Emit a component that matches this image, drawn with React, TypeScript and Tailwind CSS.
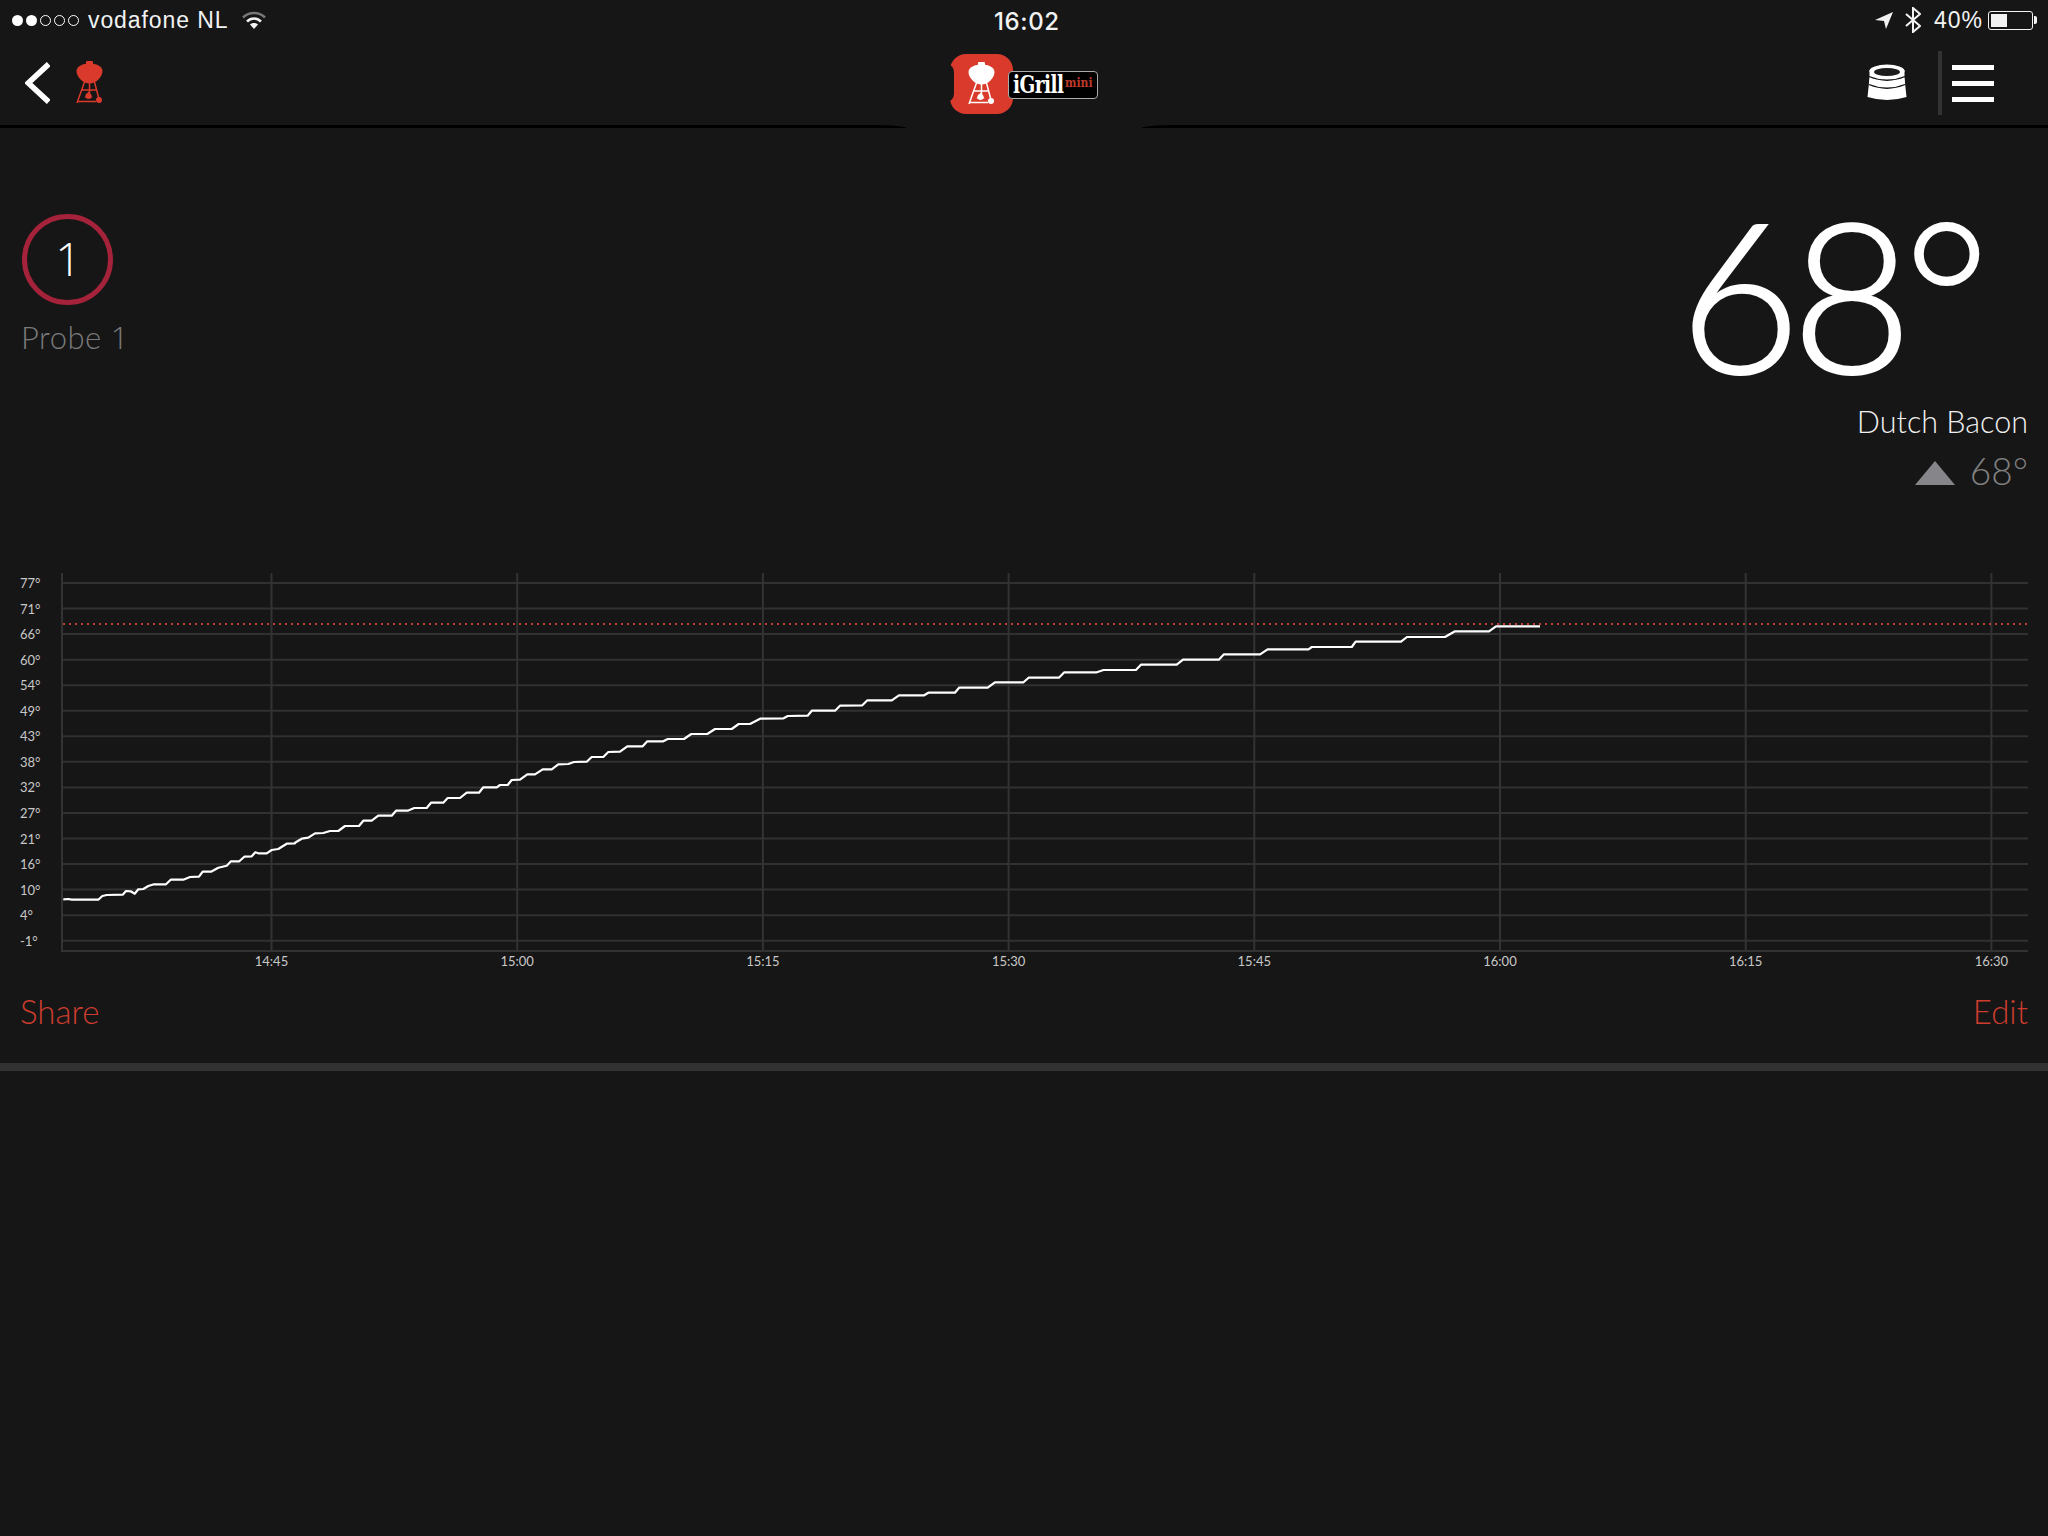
const z7: number[][] = [[190,298],[205,297],[215,299],[295,299],[307,288],[320,285],[368,284],[378,273],[392,274],[404,281],[415,268],[430,267],[445,258],[462,253],[498,253],[512,239],[550,239],[570,231],[597,230],[608,215],[633,215],[655,203],[680,197],[693,184],[718,184],[733,170],[755,169],[766,157],[775,160],[800,160],[815,150],[835,147],[860,131],[885,130]];
const z11: number[][] = [[0,218],[20,206],[40,203],[60,190],[85,189],[105,183],[130,183],[150,168],[192,168],[205,152],[230,152],[250,137],[290,137],[303,122],[338,122],[358,114],[395,114],[408,98],[445,98],[458,84],[495,84],[515,68],[552,68],[565,52],[605,52],[615,45],[638,45]];
const z10: number[][] = [[35,180],[60,179],[82,163],[105,163],[128,148],[155,148],[175,133],[205,132],[222,126],[260,125],[275,111],[310,111],[325,96],[360,95],[382,79],[428,79],[442,64],[490,64],[503,57],[552,57],[574,42],[622,42],[645,27],[695,27],[716,12],[750,12]];
const z12: number[][] = [[12,296],[68,295],[78,288],[125,287],[135,272],[190,272],[202,257],[255,256],[267,241],[325,241],[342,226],[402,226],[412,218],[475,218],[485,203],[553,203],[570,187],[638,187],[650,173],[722,173],[735,157],[812,157],[828,150],[905,150],[917,134],[1002,134],[1017,119],[1102,119],[1114,103],[1200,103],[1218,88],[1315,88],[1323,81],[1418,81],[1427,65],[1535,65]];
const linePoints = [
  ...z7.map(([x, y]) => [x / 3, 800 + y / 3]),
  ...z11.map(([x, y]) => [295 + x / 3, 770 + y / 3]),
  ...z10.map(([x, y]) => [500 + x / 3, 720 + y / 3]),
  ...z12.map(([x, y]) => [755 + x / 2.376, 620 + y / 3]),
  [1407, 637], [1445, 637], [1455, 631.3], [1489, 631.3], [1496, 626.3], [1540, 626.3],
].map(([x, y]) => `${x.toFixed(1)},${y.toFixed(1)}`).join(" ");

const yLabels = ["77°", "71°", "66°", "60°", "54°", "49°", "43°", "38°", "32°", "27°", "21°", "16°", "10°", "4°", "-1°"];
const xLabels = ["14:45", "15:00", "15:15", "15:30", "15:45", "16:00", "16:15", "16:30"];

function Kettle({ color, className }: { color: string; className: string }) {
  return (
    <svg viewBox="0 0 30 43" className={className} fill={color} stroke="none">
      <path d="M10 3 V1 Q10 0 11 0 H16 Q17 0 17 1 V3 Z" />
      <path d="M0.500 10 C0.500 5 7 2.500 13.500 2.500 C20 2.500 26.500 5 26.500 10 C26.500 16 20 22.500 13.500 22.500 C7 22.500 0.500 16 0.500 10 Z" />
      <g stroke={color} strokeWidth="1.500" fill="none">
        <path d="M8.500 21 L1 42 M18.500 21 L23 38 M13.500 21 V32" />
        <path d="M5.500 29 H21 M2 40.500 H20" />
      </g>
      <path d="M12.500 30.500 L16.500 36.500 H8.500 Z" />
      <circle cx="12.500" cy="35" r="3" />
      <circle cx="23" cy="39" r="3" />
    </svg>
  );
}

function ProbeStack() {
  return (
    <svg viewBox="0 0 40 37" className="w-[40px] h-[37px] mt-[-1px]" fill="none">
      <path d="M2.500 6 V13 Q2 16 2 19 L0.500 33 Q20 39 39.500 33 L38 19 Q38 16 37.500 13 V6 Z" fill="#ffffff" />
      <ellipse cx="20" cy="7" rx="17.500" ry="6.500" fill="#ffffff" />
      <ellipse cx="20" cy="8" rx="13" ry="4" fill="#1c1c1c" />
      <path d="M2 12.500 Q20 20 38 12.500" stroke="#161616" strokeWidth="1.300" />
      <path d="M2 20.500 Q20 28 38 20.500" stroke="#161616" strokeWidth="1.300" />
    </svg>
  );
}

function Dot({ filled }: { filled: boolean }) {
  return (
    <span className={filled ? "block w-[11px] h-[11px] rounded-full bg-white" : "block w-[11px] h-[11px] rounded-full border border-white"} />
  );
}

export default function App() {
  return (
    <div className="w-[2048px] h-[1536px] bg-[#161616] text-white overflow-hidden font-['Lato',sans-serif] font-light">
      {/* status bar */}
      <div className="relative flex h-[40px] items-center justify-between pl-[12px] pr-[11px] font-['Liberation_Sans',sans-serif] font-normal text-[23px] text-[#f2f2f2]">
        <div className="flex items-center">
          <div className="flex gap-[3px]">
            <Dot filled /><Dot filled /><Dot filled={false} /><Dot filled={false} /><Dot filled={false} />
          </div>
          <span className="ml-[9px] tracking-[0.9px]">vodafone NL</span>
          <svg viewBox="0 0 24 18" className="ml-[14px] w-[24px] h-[18px]" fill="none" strokeLinecap="butt">
            <path d="M1 6.500 C7 0.500 17 0.500 23 6.500" stroke="#777777" strokeWidth="2.500" />
            <path d="M5 10.500 C9 6.500 15 6.500 19 10.500" stroke="#f2f2f2" strokeWidth="2.500" />
            <path d="M8 13.500 L12 18 L16 13.500 C14 11.500 10 11.500 8 13.500 Z" fill="#f2f2f2" />
          </svg>
        </div>
        <span className="absolute left-[994px] top-[4px] font-['Inter',sans-serif] font-medium text-[24px] tracking-[0.6px]">16:02</span>
        <div className="flex items-center">
          <svg viewBox="0 0 18 17" className="w-[18px] h-[17px]" fill="#f2f2f2">
            <path d="M18 0 L0 8 L9 9 L11 17 Z" />
          </svg>
          <svg viewBox="0 0 16 26" className="ml-[12px] w-[16px] h-[26px]" fill="none" stroke="#f2f2f2" strokeWidth="2">
            <path d="M1 7 L15 19 L8 25 V1 L15 7 L1 19" />
          </svg>
          <span className="ml-[13px] tracking-[1px]">40%</span>
          <div className="ml-[5px] flex items-center">
            <div className="w-[45px] h-[19px] rounded-[3px] border border-[#f2f2f2] p-[2px]">
              <div className="w-[16px] h-full bg-[#f2f2f2]" />
            </div>
            <div className="w-[3px] h-[8px] rounded-r-[2px] bg-[#f2f2f2] ml-[1px]" />
          </div>
        </div>
      </div>

      {/* navigation */}
      <div className="flex h-[85px] items-center justify-between">
        <div className="flex items-center pl-[25px]">
          <svg viewBox="0 0 24 41" className="w-[25px] h-[42px]" fill="none" stroke="#ffffff" strokeWidth="5.500">
            <path d="M23 2 L3 20.500 L23 39" />
          </svg>
          <Kettle color="#d93a2b" className="ml-[26px] w-[30px] h-[43px]" />
        </div>
        <div className="absolute left-[950px] top-[54px] flex items-center">
          <div className="relative w-[63px] h-[60px] rounded-[16px] bg-[#d93a2b]">
            <div className="absolute left-[-5px] top-[10px] w-[9px] h-[38px] rounded-r-[8px] bg-[#161616]" />
            <Kettle color="#ffffff" className="absolute left-[18px] top-[8px] w-[30px] h-[43px]" />
          </div>
          <div className="relative ml-[-5px] mt-[1px] flex h-[28px] w-[90px] items-center rounded-[4px] border border-[#aaaaaa] bg-black pl-[4px]">
            <span className="inline-block w-[50px] origin-left scale-x-[0.82] whitespace-nowrap font-['DejaVu_Serif_Condensed','DejaVu_Serif',serif] font-bold text-[25px] leading-none text-white tracking-[-0.6px]">iGrill</span>
            <span className="ml-[2px] mt-[-4px] font-['DejaVu_Serif_Condensed','DejaVu_Serif',serif] font-bold text-[12px] leading-none text-[#c0392b]">mini</span>
          </div>
        </div>
        <div className="flex items-center pr-[54px]">
          <ProbeStack />
          <div className="ml-[31px] w-[4px] h-[64px] bg-[#333333]" />
          <div className="ml-[10px] mt-[2px] flex flex-col gap-[11px]">
            <div className="w-[42px] h-[5px] bg-white" />
            <div className="w-[42px] h-[5px] bg-white" />
            <div className="w-[42px] h-[5px] bg-white" />
          </div>
        </div>
      </div>
      <div className="flex h-[3px]">
        <div className="flex-1 bg-black rounded-tr-[30px_3px]" />
        <div className="w-[236px]" />
        <div className="flex-1 bg-black rounded-tl-[30px_3px]" />
      </div>

      {/* probe summary */}
      <div className="flex h-[442px] justify-between pl-[21px] pr-[20px]">
        <div className="pt-[86px]">
          <div className="ml-[1px] flex w-[91px] h-[91px] items-center justify-center rounded-full border-[5px] border-[#a4233b] font-['Open_Sans',sans-serif] text-[46px] leading-none text-white pb-[3px] pl-[2px]">1</div>
          <div className="mt-[12px] text-[31px] leading-[40px] text-[#7a7a7a] tracking-[0.5px]">Probe <span className="font-['Open_Sans',sans-serif]">1</span></div>
        </div>
        <div className="flex flex-col items-end pt-[66px]">
          <div className="text-[209px] leading-[197px] mr-[47px] tracking-[-9px] [-webkit-text-stroke:2px_#ffffff]">68°</div>
          <div className="mt-[10px] text-[30.500px] leading-[40px] text-[#f0f0f0]">Dutch Bacon</div>
          <div className="mt-[8px] flex items-center text-[37px] leading-[44px] text-[#808080]">
            <svg viewBox="0 0 40 24" className="mr-[15px] mt-[3px] w-[40px] h-[24px]" fill="#86868a"><path d="M20 0 L40 24 H0 Z" /></svg>
            68°
          </div>
        </div>
      </div>

      {/* chart */}
      <svg viewBox="0 570 2048 405" className="block w-full h-[405px]" fill="none">
        {yLabels.map((label, i) => (
          <g key={label}>
            <line x1="62" x2="2028" y1={583 + i * 25.55} y2={583 + i * 25.55} stroke="#313131" strokeWidth="2" />
            <text x="20" y={588 + i * 25.55} fill="#c8c8c8" fontSize="13" fontWeight="400" fontFamily="Lato, sans-serif">{label}</text>
          </g>
        ))}
        <line x1="62" x2="62" y1="573" y2="951" stroke="#333333" strokeWidth="2" />
        <line x1="61" x2="2028" y1="951" y2="951" stroke="#333333" strokeWidth="2" />
        {xLabels.map((label, i) => (
          <g key={label}>
            <line x1={271.5 + i * 245.7} x2={271.5 + i * 245.7} y1="573" y2="951" stroke="#333333" strokeWidth="2" />
            <text x={271.5 + i * 245.7} y="966" textAnchor="middle" fill="#c8c8c8" fontSize="13" fontWeight="400" fontFamily="Lato, sans-serif">{label}</text>
          </g>
        ))}
        <line x1="63" x2="2028" y1="624" y2="624" stroke="#c04030" strokeWidth="2" strokeDasharray="2 4" />
        <polyline points={linePoints} stroke="#ffffff" strokeWidth="2.200" strokeLinejoin="round" />
      </svg>

      {/* actions */}
      <div className="flex h-[88px] items-start justify-between px-[20px] pt-[14px] text-[33px] leading-[44px] text-[#cc3d2e]">
        <span>Share</span>
        <span>Edit</span>
      </div>
      <div className="h-[8px] bg-[#323232]" />
    </div>
  );
}
